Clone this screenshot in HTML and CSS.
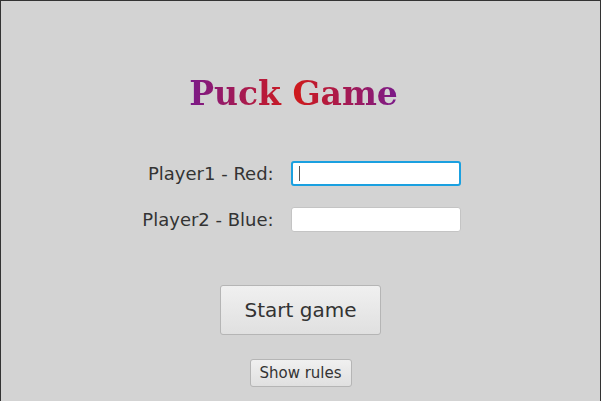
FILE: index.html
```html
<!DOCTYPE html>
<html>
<head>
<meta charset="utf-8">
<link rel="stylesheet" href="styles.css">
</head>
<body>
<div class="window">
  <h1 class="title">Puck Game</h1>
  <div class="form">
    <label class="label">Player1 - Red:</label>
    <div class="input focused"><span class="caret"></span></div>
    <label class="label">Player2 - Blue:</label>
    <div class="input"></div>
  </div>
  <button class="btn start">Start game</button>
  <button class="btn rules">Show rules</button>
</div>
</body>
</html>
```
FILE: styles.css
```css
html, body {
  margin: 0;
  padding: 0;
}
body {
  width: 601px;
  height: 401px;
  overflow: hidden;
  font-family: "DejaVu Sans", sans-serif;
}
.window {
  box-sizing: border-box;
  width: 601px;
  height: 401px;
  background: #d3d3d3;
  border-top: 1px solid #333;
  border-left: 1px solid #333;
  border-right: 1px solid #333;
  display: flex;
  flex-direction: column;
  align-items: center;
}
.title {
  margin: 70px 0 0 -14px;
  font-family: "DejaVu Serif", serif;
  font-weight: bold;
  font-size: 33px;
  line-height: 46px;
  background: linear-gradient(90deg, #7a1a8a 0%, #d01a1a 50%, #7a1a8a 100%);
  -webkit-background-clip: text;
  background-clip: text;
  color: transparent;
}
.form {
  margin-top: 44px;
  margin-left: 2px;
  display: grid;
  grid-template-columns: auto 170px;
  column-gap: 17px;
  row-gap: 21px;
  align-items: center;
}
.label {
  justify-self: end;
  font-size: 18px;
  line-height: 21px;
  color: #333;
}
.input {
  box-sizing: border-box;
  height: 25px;
  background: #fff;
  border: 1px solid #c4c4c4;
  border-radius: 3px;
  display: flex;
  align-items: center;
  padding-left: 7px;
}
.input.focused {
  border: 2px solid #1aa0e0;
  padding-left: 6px;
}
.caret {
  width: 1px;
  height: 15px;
  background: #555;
}
.btn {
  font-family: "DejaVu Sans", sans-serif;
  color: #333;
  border: 1px solid #b5b5b5;
  border-radius: 3px;
  background: linear-gradient(#f0f0f0, #e0e0e0);
  padding: 0;
}
.start {
  margin-top: 53px;
  width: 161px;
  height: 50px;
  font-size: 20px;
}
.rules {
  margin-top: 24px;
  width: 102px;
  height: 28px;
  font-size: 15px;
}
```
